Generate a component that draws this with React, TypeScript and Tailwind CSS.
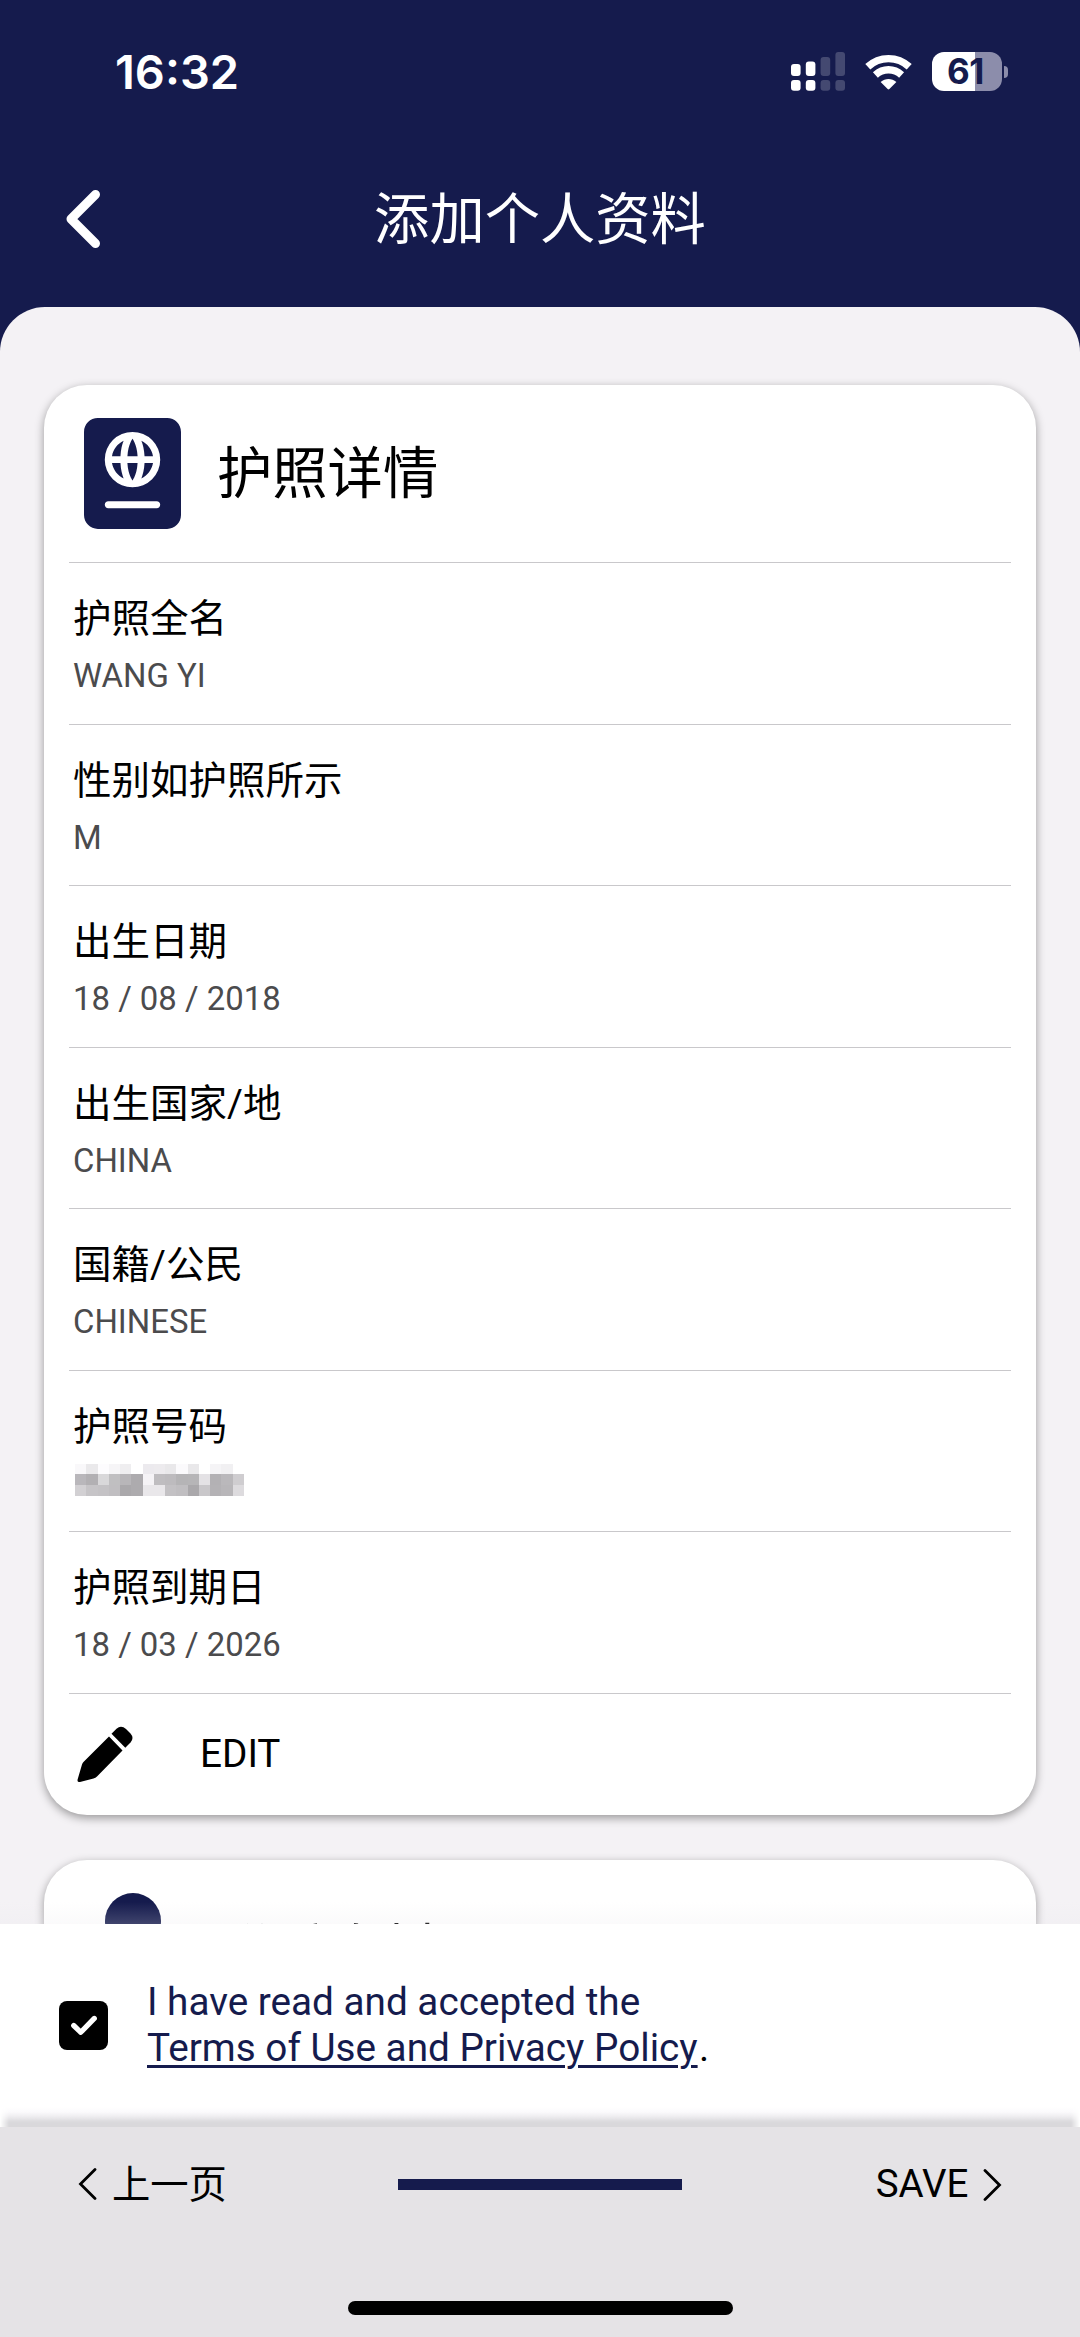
import React from "react";
import { FaPassport } from "react-icons/fa6";

const fields = [
  { label: "护照全名", value: "WANG YI" },
  { label: "性别如护照所示", value: "M" },
  { label: "出生日期", value: "18 / 08 / 2018" },
  { label: "出生国家/地", value: "CHINA" },
  { label: "国籍/公民", value: "CHINESE" },
  { label: "护照号码", value: null },
  { label: "护照到期日", value: "18 / 03 / 2026" },
];

// Grey levels of the censored passport number, one row of blocks per line.
const mosaic = [
  ["#f9f8fa", "#eae9eb", "#fdfcfe", "#f6f5f7", "#efeef0", "#ffffff", "#eceaee", "#edebee", "#e9e8ea", "#fbfafc", "#e9e8ea", "#ffffff", "#f5f4f6", "#f1f0f2", "#ffffff"],
  ["#b9b7bb", "#b2b0b3", "#d9d8da", "#c0bfc1", "#b8b6b9", "#adabae", "#f5f3f6", "#bfbdc0", "#bdbbbe", "#b5b4b6", "#b6b5b7", "#e4e2e5", "#b3b1b4", "#bab8bb", "#cfcdd0"],
  ["#d2d0d3", "#c6c4c7", "#c4c2c5", "#c0bec1", "#aaa8ab", "#adabae", "#e9e7ea", "#e9e7ea", "#c3c1c4", "#c0bec1", "#aaa8ab", "#c9c7ca", "#b4b2b5", "#b8b6b9", "#dddbde"],
];

function StatusBar() {
  return (
    <div className="flex h-[143px] items-center justify-between pl-[115px] pr-[72px]">
      <span className="mb-px font-['Inter'] text-[47px] font-semibold leading-none text-white">16:32</span>
      <div className="flex items-center">
        <svg width="54" height="39" viewBox="0 0 54 39" fill="#fff">
          <rect x="0" y="12" width="9.6" height="12" rx="3" />
          <rect x="14.8" y="9.5" width="9.6" height="14.5" rx="3" />
          <rect x="0" y="28" width="9.6" height="10.7" rx="3" />
          <rect x="14.8" y="28" width="9.6" height="10.7" rx="3" />
          <g opacity="0.2">
            <rect x="29.6" y="5" width="9.6" height="19" rx="3" />
            <rect x="44.4" y="0" width="9.6" height="24" rx="3" />
            <rect x="29.6" y="28" width="9.6" height="10.7" rx="3" />
            <rect x="44.4" y="28" width="9.6" height="10.7" rx="3" />
          </g>
        </svg>
        <svg className="ml-[20px]" width="47" height="36" viewBox="0 0 47 36">
          <g fill="none" stroke="#fff" strokeWidth="7.4">
            <path d="M2.8 12.8 C14.5 1.9 32.5 1.9 44.2 12.8" />
            <path d="M10.4 20.9 C18 14.1 29 14.1 36.6 20.9" />
          </g>
          <path d="M15.6 28 C20.2 24 26.8 24 31.4 28 L24.4 35 Q23.5 35.8 22.6 35 Z" fill="#fff" />
        </svg>
        <div className="ml-[20px] flex h-[39px] w-[70px] items-center justify-center rounded-[12px] bg-[linear-gradient(90deg,#fff_61.5%,#8c8dab_61.5%)] pr-[3px]">
          <span className="font-['Inter'] text-[35px] font-bold leading-none tracking-[-0.5px] text-[#151b4d]">61</span>
        </div>
        <div className="ml-[2px] h-[12px] w-[4px] rounded-r-full bg-[#8c8dab]" />
      </div>
    </div>
  );
}

function Header() {
  return (
    <div className="flex h-[164px] items-center justify-between px-[66px] pb-[12px]">
      <svg width="34" height="58" viewBox="0 0 34 58" fill="none" stroke="#fff" strokeWidth="9" strokeLinecap="round" strokeLinejoin="round">
        <path d="M29.5 4.5 L5 29 L29.5 53.5" />
      </svg>
      <h1 className="mt-[3px] text-[55.3px] font-normal leading-none text-white">添加个人资料</h1>
      <div className="w-[34px]" />
    </div>
  );
}

function Mosaic() {
  return (
    <div className="ml-[2px] mt-[13px] w-[169px]">
      {mosaic.map((row, i) => (
        <div key={i} className="flex h-[10.8px]">
          {row.map((c, j) => (
            <span key={j} className="grow" style={{ backgroundColor: c }} />
          ))}
        </div>
      ))}
    </div>
  );
}

export default function App() {
  return (
    <div className="flex h-[2337px] w-[1080px] flex-col overflow-hidden bg-[#151b4d] font-['Roboto','Noto_Sans_CJK_SC',sans-serif]">
      <StatusBar />
      <Header />

      <main className="relative h-[1617px] overflow-hidden rounded-t-[45px] bg-[#f4f2f5] px-[44px] pt-[78px]">
        <section className="h-[1430px] rounded-[43px] bg-white px-[25px] shadow-[0_3px_10px_rgba(0,0,0,0.38)]">
          <div className="flex h-[178px] items-center border-b border-[#c9c8cb] pl-[15px]">
            <FaPassport className="h-[111px] w-[97px] text-[#151b4d]" />
            <h2 className="ml-[36px] mt-[2px] text-[55.3px] font-normal leading-none text-black">护照详情</h2>
          </div>
          {fields.map((f) => (
            <div key={f.label} className="h-[161.5px] border-b border-[#c9c8cb] pl-[4px] pt-[32px]">
              <div className="h-[48px] text-[38.5px] leading-[48px] text-black">{f.label}</div>
              {f.value === null ? (
                <Mosaic />
              ) : (
                <div className="mt-[13px] text-[32.9px] leading-[40px] text-[#4b4b4d]">{f.value}</div>
              )}
            </div>
          ))}
          <div className="flex h-[121px] items-center pl-[8px]">
            <svg width="57" height="57" viewBox="0 0 57 57">
              <path d="M32 10.5 L45.5 24.5 L20 50.5 Q18.5 52 16.5 52.5 L3 56 Q0 56.5 0.6 53.5 L5 38.5 Q5.5 37 6.7 35.8 Z" fill="#000" />
              <path d="M34.5 7.8 L39.5 2.8 Q44 -1.5 49 3 L53.5 7.5 Q57.5 12 53.5 16.5 L48.3 21.8 Z" fill="#000" />
            </svg>
            <span className="ml-[66px] text-[38.7px] leading-none text-black">EDIT</span>
          </div>
        </section>

        <section className="mt-[45px] h-[300px] rounded-[43px] bg-white px-[40px] pt-[33px] shadow-[0_3px_10px_rgba(0,0,0,0.38)]">
          <div className="flex">
            <svg width="97" height="111" viewBox="0 0 97 111" fill="#151b4d">
              <circle cx="49" cy="28" r="28" />
              <path d="M0 111 a39 42 0 0 1 97 0z" />
            </svg>
            <h2 className="ml-[36px] mt-[31px] text-[55.3px] leading-none text-black">联系资料</h2>
          </div>
        </section>
        <div className="absolute inset-x-0 bottom-0 h-[22px] bg-gradient-to-b from-white/0 to-[#e9e7ec]/20" />
      </main>

      <div className="flex h-[183px] items-start bg-white pl-[59px]">
        <div className="mt-[77px] flex h-[49px] w-[49px] items-center justify-center rounded-[8px] bg-black">
          <svg width="28" height="21" viewBox="0 0 28 21" fill="none" stroke="#fff" strokeWidth="5.2" strokeLinecap="round" strokeLinejoin="round">
            <path d="M3.7 10.5 L10.8 17.3 L24.3 3.4" />
          </svg>
        </div>
        <p className="ml-[39px] mt-[55px] text-[38.7px] leading-[46px] text-[#151b4d]">
          I have read and accepted the
          <br />
          <span className="underline decoration-[2.5px] underline-offset-[4px]">Terms of Use and Privacy Policy</span>
          <span className="ml-[1.5px] text-black">.</span>
        </p>
      </div>

      <div className="bg-white">
        <div className="h-[20px] bg-[linear-gradient(180deg,#ffffff,#fbfafc_25%,#eeedf0_48%,#dddcdf_70%,#d9d8db_80%,#d9d8db)] [mask-image:linear-gradient(90deg,transparent,#000_9px,#000_1071px,transparent)]" />
      </div>
      <footer className="flex h-[210px] flex-col items-center bg-[#e5e3e6]">
        <div className="flex h-[115px] w-full items-center justify-between px-[78px]">
          <div className="flex w-[320px] items-center">
            <svg width="19" height="32" viewBox="0 0 19 32" fill="none" stroke="#000" strokeWidth="2.8" strokeLinecap="round">
              <path d="M17 1.5 L2.5 16 L17 30.5" />
            </svg>
            <span className="ml-[15px] mt-[2px] text-[38.3px] leading-none text-black">上一页</span>
          </div>
          <div className="h-[11px] w-[284px] bg-[#151b4d]" />
          <div className="flex w-[320px] items-center justify-end">
            <span className="mr-[14.5px] text-[38.5px] leading-none text-black">SAVE</span>
            <svg width="19" height="32" viewBox="0 0 19 32" fill="none" stroke="#000" strokeWidth="2.8" strokeLinecap="round">
              <path d="M2 1.5 L16.5 16 L2 30.5" />
            </svg>
          </div>
        </div>
        <div className="mt-[59px] h-[14px] w-[385px] rounded-full bg-black" />
      </footer>
    </div>
  );
}
